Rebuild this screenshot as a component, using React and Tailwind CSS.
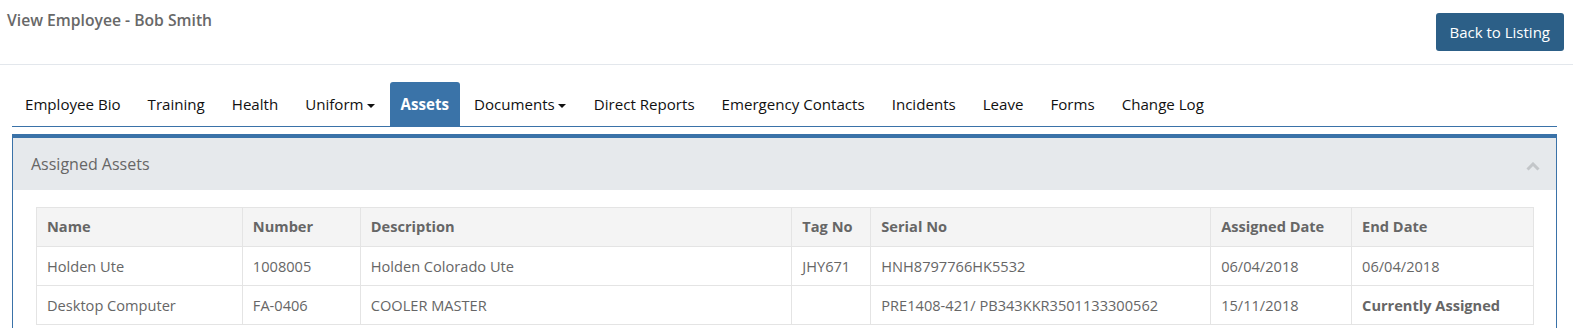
import React from "react";

const tabs = [
  { label: "Employee Bio" },
  { label: "Training" },
  { label: "Health" },
  { label: "Uniform", caret: true },
  { label: "Assets", active: true },
  { label: "Documents", caret: true },
  { label: "Direct Reports" },
  { label: "Emergency Contacts" },
  { label: "Incidents" },
  { label: "Leave" },
  { label: "Forms" },
  { label: "Change Log" },
];

const columns = [
  { key: "name", label: "Name", w: "w-[206px]" },
  { key: "number", label: "Number", w: "w-[118px]" },
  { key: "description", label: "Description", w: "w-[432px]" },
  { key: "tag", label: "Tag No", w: "w-[79px]" },
  { key: "serial", label: "Serial No", w: "w-[340px]" },
  { key: "assigned", label: "Assigned Date", w: "w-[141px]" },
  { key: "end", label: "End Date", w: "w-[182px]" },
];

const assets = [
  {
    name: "Holden Ute",
    number: "1008005",
    description: "Holden Colorado Ute",
    tag: "JHY671",
    serial: "HNH8797766HK5532",
    assigned: "06/04/2018",
    end: "06/04/2018",
  },
  {
    name: "Desktop Computer",
    number: "FA-0406",
    description: "COOLER MASTER",
    tag: "",
    serial: "PRE1408-421/ PB343KKR3501133300562",
    assigned: "15/11/2018",
    end: null,
  },
];

const Caret = () => (
  <span className="inline-block ml-[3px] mr-[1px] mt-[3px] w-0 h-0 border-l-[4.5px] border-r-[4.5px] border-t-[4.5px] border-l-transparent border-r-transparent border-t-[#111]" />
);

export default function App() {
  return (
    <div className="bg-white min-h-screen font-['Open_Sans',sans-serif] text-[14px]">
      {/* Header */}
      <div className="flex justify-between items-start h-[65px] border-b border-[#e3e7ec] pl-[7px] pr-[9px]">
        <h1 className="mt-[9px] text-[15.7px] font-semibold text-[#686868]">View Employee - Bob Smith</h1>
        <button className="mt-[13px] h-[38px] px-[14px] rounded-[3px] bg-[#2c5f87] text-white text-[15px]">
          Back to Listing
        </button>
      </div>

      <div className="pl-[12px] pr-[16px] pt-[18px]">
        {/* Tabs */}
        <div className="flex border-b border-[#3a72a8] h-[44px] items-end">
          {tabs.map((t) => (
            <div
              key={t.label}
              className={`h-[44px] flex items-center px-[13px] mr-[1px] rounded-t-[3px] text-[15.1px] ${
                t.active ? "bg-[#3a73a8] text-white font-bold !px-[11px]" : "text-[#111]"
              }`}
            >
              {t.label}
              {t.caret && <Caret />}
            </div>
          ))}
        </div>

        {/* Panel */}
        <div className="mt-[7px] border border-[#3a72a8] border-t-[4px]">
          <div className="flex justify-between items-center h-[52px] bg-[#e6e9ec] pl-[18px] pr-[16px]">
            <span className="text-[16px] text-[#666]">Assigned Assets</span>
            <svg width="14" height="9" viewBox="0 0 14 9" className="mt-[4px]">
              <path d="M1.5 7.5 L7 2 L12.5 7.5" fill="none" stroke="#c3c6c9" strokeWidth="3" />
            </svg>
          </div>
          <div className="pl-[23px] pr-[22px] pt-[17px] pb-[20px]">
            <table className="border-collapse table-fixed text-left text-[14.6px]">
              <thead>
                <tr className="bg-[#f4f4f4] h-[39px]">
                  {columns.map((c) => (
                    <th key={c.key} className={`${c.w} border border-[#e4e4e4] px-[10px] font-bold text-[#666]`}>
                      {c.label}
                    </th>
                  ))}
                </tr>
              </thead>
              <tbody>
                {assets.map((a) => (
                  <tr key={a.name} className="h-[39px]">
                    {columns.map((c) => (
                      <td key={c.key} className="border border-[#e4e4e4] px-[10px] pt-[1px] text-[#666]">
                        {c.key === "end" && a.end === null ? (
                          <span className="font-bold">Currently Assigned</span>
                        ) : (
                          a[c.key]
                        )}
                      </td>
                    ))}
                  </tr>
                ))}
              </tbody>
            </table>
          </div>
        </div>
      </div>
    </div>
  );
}
